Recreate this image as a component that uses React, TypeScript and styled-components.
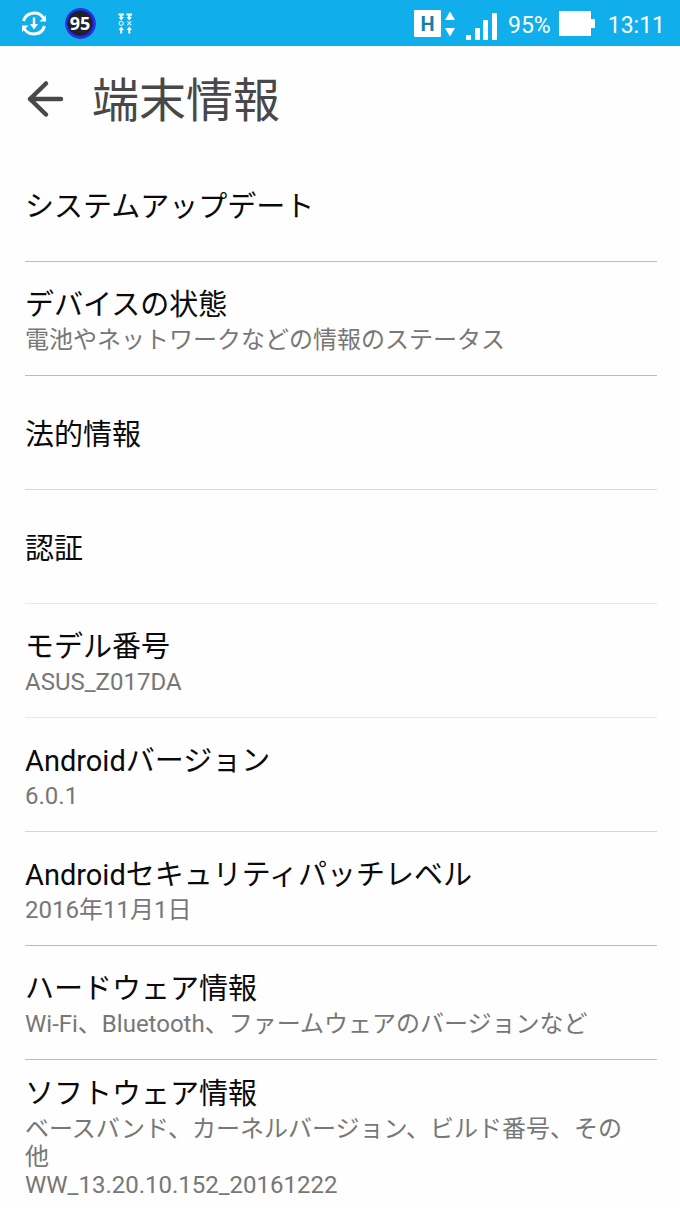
import React from "react";
import styled, { createGlobalStyle } from "styled-components";

const GlobalStyle = createGlobalStyle`
  * { box-sizing: border-box; }
  body {
    margin: 0;
    background: #fefefe;
    font-family: Roboto, "Noto Sans CJK JP", sans-serif;
    color: #0a0a0a;
  }
`;

const StatusBar = styled.div`
  display: flex;
  align-items: center;
  height: 46px;
  padding: 2px 15px 0 21px;
  background: #10aeeb;
  color: #fff;
`;

const StatusIcons = styled.div`
  display: flex;
  align-items: center;
  gap: 18px;
  flex: 1;
`;

const StatusSvg = styled.svg`
  display: block;
  flex: none;
`;

const Reading = styled.span`
  padding-top: 4px;
  font-size: 23px;
  line-height: 28px;
`;

const Readings = styled.div`
  display: flex;
  align-items: center;
  gap: 8px;
`;

const Clock = styled(Reading)`
  margin-left: 4px;
`;

const Header = styled.header`
  display: flex;
  align-items: center;
  gap: 28px;
  height: 102px;
  padding: 4px 26px 0;
`;

const BackButton = styled.button`
  display: flex;
  padding: 0;
  border: 0;
  background: none;
  color: #484848;
`;

const Heading = styled.h1`
  margin: 0;
  padding-top: 4px;
  font-size: 47px;
  font-weight: 400;
  line-height: 60px;
  color: #484848;
`;

const List = styled.ul`
  margin: 0;
  padding: 0 23px 0 25px;
  list-style: none;
`;

const Item = styled.li<{ $line: string; $single: boolean }>`
  display: flex;
  flex-direction: column;
  justify-content: center;
  min-height: 114px;
  padding: ${(p) => (p.$single ? 4 : 0)}px 32px 0 0;
  border-bottom: 1px solid ${(p) => p.$line};

  &:last-child {
    padding: 13px 32px 8px 0;
    border-bottom: 0;
  }
`;

const ItemTitle = styled.div`
  font-size: 29px;
  line-height: 42px;
`;

const ItemNote = styled.div`
  font-size: 24px;
  line-height: 28px;
  color: #777;
`;

type Entry = { title: string; notes?: string[]; line?: string };

const entries: Entry[] = [
  { title: "システムアップデート" },
  { title: "デバイスの状態", notes: ["電池やネットワークなどの情報のステータス"] },
  { title: "法的情報", line: "#d6d6d6" },
  { title: "認証", line: "#e8e8e8" },
  { title: "モデル番号", notes: ["ASUS_Z017DA"], line: "#e8e8e8" },
  { title: "Androidバージョン", notes: ["6.0.1"], line: "#d6d6d6" },
  { title: "Androidセキュリティパッチレベル", notes: ["2016年11月1日"] },
  { title: "ハードウェア情報", notes: ["Wi-Fi、Bluetooth、ファームウェアのバージョンなど"] },
  {
    title: "ソフトウェア情報",
    notes: ["ベースバンド、カーネルバージョン、ビルド番号、その他", "WW_13.20.10.152_20161222"],
  },
];

const SyncIcon = () => (
  <StatusSvg width="26" height="26" viewBox="0 0 26 26" fill="none" stroke="#fff" strokeWidth="3">
    <path d="M2.500 10A11 10.500 0 0 1 22.500 7" />
    <path d="M23.500 15A11 10.500 0 0 1 3.500 18" />
    <path d="M25 4v6.500h-6.500zM1 21v-6.500h6.500z" fill="#fff" stroke="none" />
    <path d="M13 6.500v9" strokeWidth="2.400" />
    <path d="M9 13h8L13 18.500z" fill="#fff" stroke="none" />
  </StatusSvg>
);

const BatteryBadge = () => (
  <StatusSvg width="32" height="32" viewBox="0 0 32 32">
    <circle cx="15.500" cy="15.500" r="15.200" fill="#1c20a4" />
    <circle cx="15.500" cy="15.500" r="13.900" fill="none" stroke="#2832f5" strokeWidth="1.800" />
    <circle cx="14.800" cy="15" r="12.200" fill="#20202a" />
    <text x="15" y="21.500" textAnchor="middle" fill="#fff" fontSize="18" fontWeight="700" fontFamily="Noto Sans, sans-serif">95</text>
  </StatusSvg>
);

const TransferIcon = () => (
  <StatusSvg width="20" height="22" viewBox="-3 0 20 22" fill="none" stroke="#fff" strokeWidth="2">
    <path d="M.5 1.500h5.500M8.500 1.500h5.500M3.200 1v5M11.300 1v5M3.200 15v5.500M11.300 15v5.500" />
    <path d="M.5 4h5.500L3.200 7.500zM8.500 4h5.500l-2.700 3.500zM.5 17h5.500L3.200 13.500zM8.500 17h5.500l-2.700-3.500z" fill="#fff" stroke="none" />
    <circle cx="3.200" cy="10.300" r="2" stroke="#b4e9ff" strokeWidth="1.300" />
    <path d="M9.300 8.300l4 4M13.300 8.300l-4 4" stroke="#b4e9ff" strokeWidth="1.300" />
  </StatusSvg>
);

const NetworkIcon = () => (
  <StatusSvg width="86" height="32" viewBox="0 0 86 32" fill="#fff">
    <rect x="0" y="2" width="27" height="27" rx="1" />
    <text x="13.500" y="22.500" textAnchor="middle" fill="#187fa5" fontSize="20" fontWeight="700" fontFamily="Roboto, sans-serif">H</text>
    <path d="M36 3.500l5 8.500h-10zM36 28.500l5-8.500h-10z" />
    <rect x="52" y="27" width="5" height="5" rx="1" />
    <rect x="61" y="20" width="5" height="12" rx="1" />
    <rect x="69" y="12" width="5" height="20" rx="1" />
    <rect x="78" y="5" width="5" height="27" rx="1" />
  </StatusSvg>
);

const BatteryIcon = () => (
  <StatusSvg width="37" height="26" viewBox="0 0 37 26" fill="#fff">
    <path d="M0 0h32v8h4v9h-4v8H0z" />
  </StatusSvg>
);

export default function App() {
  return (
    <>
      <GlobalStyle />
      <StatusBar>
        <StatusIcons>
          <SyncIcon />
          <BatteryBadge />
          <TransferIcon />
        </StatusIcons>
        <Readings>
          <NetworkIcon />
          <Reading>95%</Reading>
          <BatteryIcon />
          <Clock>13:11</Clock>
        </Readings>
      </StatusBar>
      <Header>
        <BackButton type="button" aria-label="戻る">
          <svg width="38" height="38" viewBox="0 0 38 38" fill="none" stroke="currentColor" strokeWidth="4.500" strokeLinecap="round" strokeLinejoin="round">
            <path d="M35 19H4M20 3.500L4 19l16 15.500" />
          </svg>
        </BackButton>
        <Heading>端末情報</Heading>
      </Header>
      <List>
        {entries.map((entry) => (
          <Item key={entry.title} $line={entry.line ?? "#bcbcbc"} $single={!entry.notes}>
            <ItemTitle>{entry.title}</ItemTitle>
            {entry.notes?.map((note) => <ItemNote key={note}>{note}</ItemNote>)}
          </Item>
        ))}
      </List>
    </>
  );
}
